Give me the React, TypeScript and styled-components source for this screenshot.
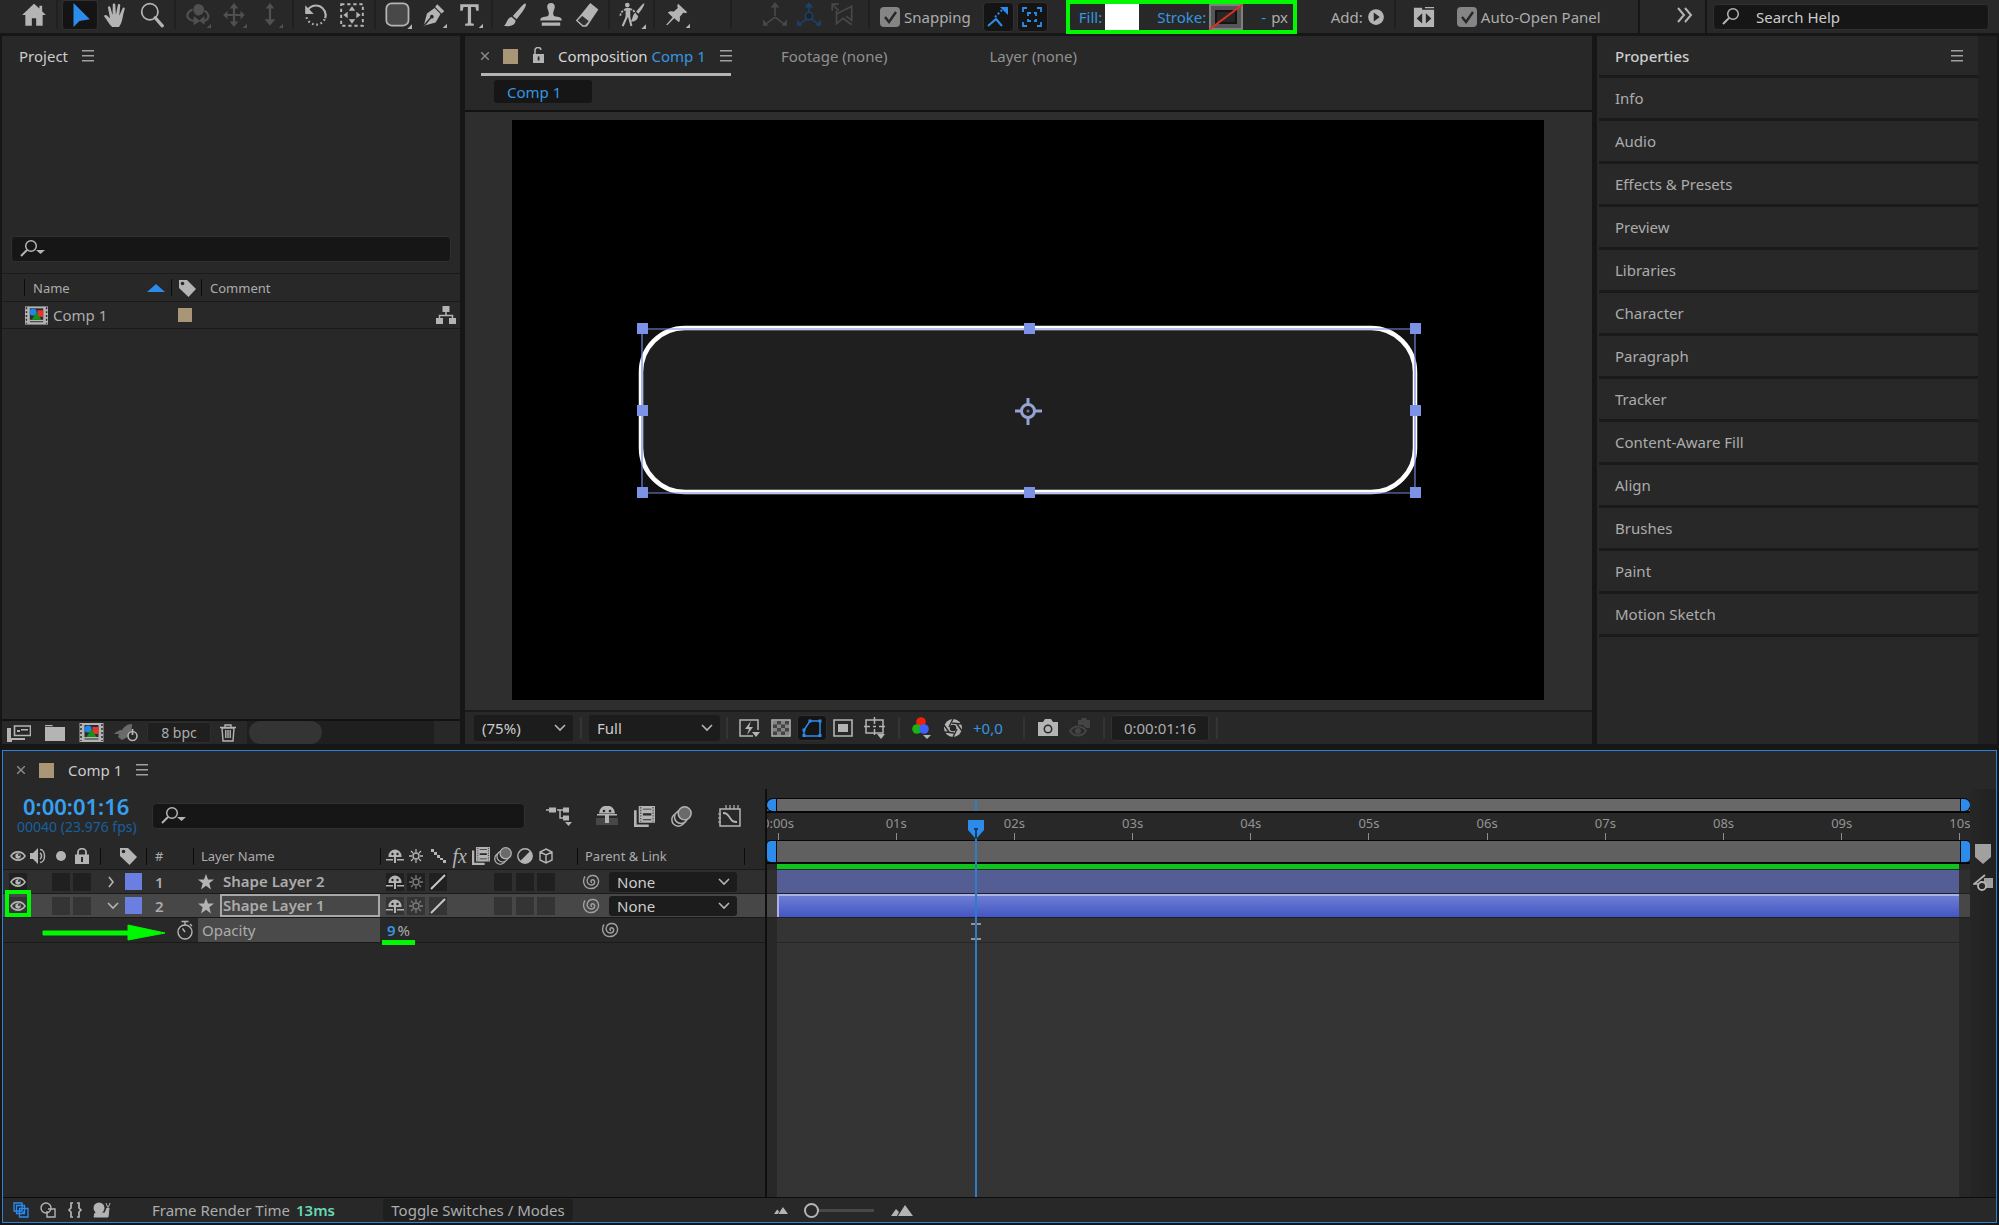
import React from "react";
import styled, { createGlobalStyle, css } from "styled-components";

/* ---------- theme values ---------- */
const c = {
  panel: "#282828",
  gap: "#161616",
  well: "#161616",
  line: "#1a1a1a",
  text: "#acacac",
  bright: "#cccccc",
  icon: "#b4b4b4",
  dim: "#505050",
  blue: "#2d8ceb",
  link: "#3596e0",
  tan: "#a99677",
  label: "#6b7fe0",
  mark: "#00f800",
};

const GlobalStyle = createGlobalStyle`
  * { box-sizing: border-box; }
  html, body { margin: 0; background: ${c.gap}; }
  body, button, input, select {
    font-family: "Noto Sans", "Open Sans", sans-serif;
    font-size: 15px;
    line-height: 20px;
    color: ${c.text};
  }
  button { background: none; border: 0; padding: 0; cursor: default; }
  h2 { margin: 0; font-size: 15px; font-weight: 400; }
  svg { display: block; flex: none; }
`;

/* ---------- icons ---------- */
type IconProps = { size?: number; h?: number; box?: string; color?: string; children: React.ReactNode };
const Icon = ({ size = 24, h, box = "0 0 24 24", color = c.icon, children }: IconProps) => (
  <svg width={size} height={h ?? size} viewBox={box} fill={color} stroke="none" aria-hidden="true">
    {children}
  </svg>
);
const line = (color: string, w = 1.6) => ({ fill: "none", stroke: color, strokeWidth: w });

const Home = () => <Icon size={26}><path d="M12 1.500 1 12h3v10h6v-7h4v7h6V12h3l-3.500-3.400V3.500h-2.500v2.600z" /></Icon>;
const Arrow = () => <Icon color={c.blue} size={26}><path d="M6 1v22l5.500-5.500L21 16z" /></Icon>;
const Hand = () => (
  <Icon size={26}>
    <path d="M8.500 23C6 21 4 17 1.300 13.600c-.8-1.200.9-2.300 2-1.300L6.500 15 4.600 5.400c-.3-1.600 1.800-2 2.200-.5L8.800 12 9 2.700c0-1.700 2.300-1.700 2.400 0l.5 9 1.800-8.900c.3-1.600 2.400-1.200 2.200.4L15 12.600l3-6.700c.7-1.400 2.500-.6 2 .8-1.300 4-1.600 7.300-2.600 10.900-.6 2.200-1.600 3.900-2.600 5.400z" />
  </Icon>
);
const Magnify = () => <Icon size={26}><g {...line(c.icon, 1.6)}><circle cx="10" cy="9" r="7.500" /><path d="m15 14.500 6.500 7.500" strokeWidth="3" strokeLinecap="round" /></g></Icon>;
const Corner = ({ color = c.icon }: { color?: string }) => <path d="M24 20v4h-4z" fill={color} />;
const Orbit = () => (
  <Icon size={26} color={c.dim}>
    <path d="M8 5a5 5 0 0 1 9.500 1c.5 4-2 6-5 6.500C9 12.500 7 8 8 5z" />
    <g {...line(c.dim, 2)}><path d="M7 7c-5 2-6 6-3.500 8.500 1.500 1.500 4 2 6 2M18 8c4 2.500 4.500 6 2.500 8-1 1-2.500 1.500-4 1.500" /></g>
    <path d="m8 13 6 4.500-6 4zM18 13v8l-5-4z" /><Corner color={c.dim} />
  </Icon>
);
const Pan = () => (
  <Icon size={26} color={c.dim}>
    <path d="m12 1 4 5h-3v5h5V8l4 4-4 4v-3h-5v5h3l-4 5-4-5h3v-5H6v3l-4-4 4-4v3h5V6H8z" /><Corner color={c.dim} />
  </Icon>
);
const Dolly = () => <Icon size={26} color={c.dim}><path d="m12 1 4 5h-3v10h4l-5 6-5-6h4V6H8z" /><Corner color={c.dim} /></Icon>;
const Rotate = () => (
  <Icon size={26}>
    <g {...line(c.icon, 2)}><path d="M4 8a9 9 0 0 1 16.500 7" /><path d="M20 16a9 9 0 0 1-17-4" strokeDasharray="1.500 2.500" /></g>
    <path d="M2 3v8h8z" />
  </Icon>
);
const PanBehind = () => (
  <Icon size={26}>
    <path d="M2 2h20v20H2z" {...line(c.icon, 1.8)} strokeDasharray="3 2.600" />
    <path d="m12 4 3 4H9zM12 20l-3-4h6zM4 12l4-3v6zM20 12l-4 3V9z" />
  </Icon>
);
const RoundRect = () => <Icon size={28}><rect x="2" y="2" width="19" height="19" rx="4.500" fill="#484848" stroke={c.icon} strokeWidth="1.500" /><Corner /></Icon>;
const Pen = () => (
  <Icon size={26}>
    <path d="m15 2 6.500 6.500-2.500 2-6-6zM12.500 5.500l5.500 5.500-4.500 8L2.500 22l3-11.500z" />
    <path d="m3 21.500 6-7" stroke="#282828" strokeWidth="1.300" /><circle cx="10" cy="13.500" r="1.700" fill="#282828" /><Corner />
  </Icon>
);
const TypeTool = () => <Icon size={26}><path d="M3 2h17v6h-2.200L17 4.500h-4V19.500l2.500.6V22H7.500v-1.900l2.500-.6V4.500H6L5.200 8H3z" /><Corner /></Icon>;
const Brush = () => <Icon size={26}><path d="M21.800 1.500c1 .8-.6 4-2.600 7L13.500 16 10 13l7-8c2-2.300 4-4.200 4.800-3.500zM9 13.800l3.600 3.200c-.5 4.500-5 6-11 5 3-1.500 3-8 7.400-8.200z" /></Icon>;
const Stamp = () => <Icon size={26}><path d="M12 1a3.500 3.500 0 0 1 3.500 3.500c0 2-1.500 3.500-1.500 6 0 2 1 3 4 3 3 .3 4 1.500 4 3.500H2c0-2 1-3.200 4-3.500 3 0 4-1 4-3 0-2.500-1.500-4-1.500-6A3.500 3.500 0 0 1 12 1zM3.500 19h17v3h-17z" /></Icon>;
const Eraser = () => <Icon size={26}><path d="m15 1 7.500 6L12 22.500H8L2 17z" /><path d="m7.500 12 7 5.500L10.500 22H8l-5.500-5z" fill="#303030" stroke={c.icon} strokeWidth="1.200" /></Icon>;
const Puppet = () => (
  <Icon size={28}>
    <circle cx="8" cy="3.500" r="2" />
    <path d="M6.500 6h4v8h-4z" /><path d="M7 7c-3 1-5 3-5 6M10 7c3 0 4 2 5 4" {...line(c.icon, 1.500)} strokeDasharray="2 1" />
    <path d="M7.500 13.500 4 21.500M9.500 13.500l2 8" {...line(c.icon, 1.800)} />
    <path d="M22.500 2c.6.600-1.500 5-5 9l-2-1.800C18.500 5.500 22 1.500 22.500 2zM14.800 10.500l2.500 2.300c-.5 3.500-3 5-6.500 4.700 2-1.500 1.500-6.500 4-7z" /><Corner />
  </Icon>
);
const Pin = () => <Icon size={26}><path d="m13 1.500 8.500 8-2 .8-1.500-.5-3.500 4c.5 2 .3 3.700-.8 5L9.500 15 3 21.500 2 21l6-7-4.500-4.300C5 8.500 7 8.300 8.800 9l4-3.500-.6-2z" /><Corner /></Icon>;
const Axis = ({ color, view = false }: { color: string; view?: boolean }) => (
  <Icon size={26} color={color}>
    <path d="M12 3v10M12 14l-8 6M12 14l8 6" {...line(color, 1.500)} />
    <path d="m12 0 4 5H8zM1 22v-6l5 6zM23 22v-6l-5 6z" />
    {view && <circle cx="12" cy="13" r="3.500" fill="#222" stroke={color} strokeWidth="1.500" />}
  </Icon>
);
const ViewAxis = () => <Icon size={26} color="#484848"><g {...line("#484848", 1.500)}><path d="M3 3l5 5M2 8V2h6" /><path d="M6 8v12l6-5 8 6M6 11l14-7v13l-5-4" /></g></Icon>;
const SnapEdge = () => <Icon size={24} color={c.blue}><path d="m2 21 8-7 6 7" {...line(c.blue, 2)} /><path d="m9 12 7-7" {...line(c.blue, 2)} strokeDasharray="2 2" /><path d="M14 2h8v8z" /></Icon>;
const SnapBox = () => (
  <Icon size={24}><g {...line(c.blue, 1.800)}><path d="M3 7V3h4M17 3h4v4M21 17v4h-4M7 21H3v-4" /><path d="M8 11V8h3M14 8h2v3M16 14v2h-2M11 16H8v-2" /></g></Icon>
);
const AddCircle = () => <Icon size={18}><circle cx="12" cy="12" r="10.500" /><path d="m9 6 8 6-8 6z" fill="#282828" /></Icon>;
const PanelSwap = () => <Icon size={22}><path d="M1 2h9v2h13v19H1zM13 1h10v1.500H13z" /><path d="m10 8-6 5.500 6 5.500zM14 8l6 5.500-6 5.500z" fill="#282828" /></Icon>;
const Chevrons = () => <Icon size={18} box="0 0 18 18"><path d="m2 2 6 7-6 7M9 2l6 7-6 7" {...line(c.icon, 2)} /></Icon>;
const Search = ({ drop = true }: { drop?: boolean }) => (
  <Icon size={26} h={20} box="0 0 26 20">
    <circle cx="11" cy="7" r="5.300" {...line(c.icon, 1.500)} /><path d="m7 11-6 6" {...line(c.icon, 2)} />
    {drop && <path d="M16 11h9l-4.500 4z" />}
  </Icon>
);
const Menu = () => <Icon size={12} box="0 0 12 12"><path d="M0 0h12v1.500H0zM0 5h12v1.500H0zM0 10h12v1.500H0z" fill="#a0a0a0" /></Icon>;
const Close = () => <Icon size={8} box="0 0 8 8"><path d="m0 0 8 8M8 0 0 8" {...line("#8c8c8c", 1.400)} /></Icon>;
const Unlock = () => <Icon size={14} h={18} box="0 0 14 18"><path d="M1 7h11v9H1z" /><path d="M3 9V4a3 3 0 0 1 6-1" {...line(c.icon, 1.500)} /><path d="M5.700 9.500h1.800v4H5.700z" fill="#282828" /></Icon>;
const Lock = () => <Icon size={14} h={17} box="0 0 14 17"><path d="M0 6.500h14V16H0z" /><path d="M3 8V4a4 3.300 0 0 1 8 0v4" {...line(c.icon, 1.800)} /><path d="M6 9h2v5H6z" fill="#282828" /></Icon>;
const Tag = () => <Icon size={18} box="0 0 18 18"><path d="M1 1h8l9 9-7.500 8L1 9z" /><circle cx="4.500" cy="4.500" r="1.800" fill="#282828" /></Icon>;
const SortUp = () => <Icon size={18} h={8} box="0 0 18 8" color={c.blue}><path d="M9 0l9 8H0z" /></Icon>;
const CompIcon = ({ w = 23 }: { w?: number }) => (
  <Icon size={w} h={19} box="0 0 24 19">
    <path d="M0 0h24v19H0z" /><path d="M5 2h14v12H5z" fill="#2c2c2c" />
    <path d="M1.500 1v17M22.500 1v17" stroke="#2c2c2c" strokeWidth="1.500" strokeDasharray="2 2" /><path d="M5 16h14" stroke="#2c2c2c" />
    <path d="M13 4h6v7h-6z" fill="#e8342c" /><circle cx="8.500" cy="6" r="3.600" fill="#1f86ee" /><path d="m12 6 5 8H7z" fill="#149414" />
  </Icon>
);
const Tree = () => <Icon size={20} h={18} box="0 0 20 18"><path d="M6.500 0h7v6h-7zM0 12h7v6H0zM13 12h7v6h-7z" /><path d="M10 6v3.500M3.500 12V9.500h13V12" {...line(c.icon, 1.500)} /></Icon>;
const Footage = () => <Icon size={24} h={18} box="0 0 24 18"><path d="M0 4h4v10h14v2H5v2H0z" /><path d="M7.500 2h16v9.500h-16z" fill="#282828" stroke={c.icon} strokeWidth="1.600" /><path d="M10 6h3v2h-3zM14 5h7v1.500h-7z" /></Icon>;
const Folder = () => <Icon size={20} h={16} box="0 0 20 16"><path d="M0 2h20v14H0zM0 0h7l1.500 1.200H0z" /></Icon>;
const Rocket = () => <Icon size={24} h={18} box="0 0 24 18"><path d="M18 0c-5 0-8 3-10 6C5 6 2 8 0 10h5l-1 3 4 3 4-2c5-4 6-9 6-14z" fill="#6a6a6a" /><circle cx="18.500" cy="12" r="4.500" fill="#282828" stroke={c.icon} strokeWidth="1.600" /><path d="M18.500 5v6" stroke={c.icon} strokeWidth="1.800" /></Icon>;
const Trash = () => <Icon size={16} h={18} box="0 0 16 18"><g {...line(c.icon, 1.400)}><path d="M2 4h12l-1 13H3zM0 3.500h16M5 3V1h6v2M5.800 6v8M8 6v8M10.200 6v8" /></g></Icon>;
const Down = () => <Icon size={12} h={8} box="0 0 12 8"><path d="m1 1 5 5 5-5" {...line(c.icon, 1.600)} /></Icon>;
const Right = () => <Icon size={8} h={12} box="0 0 8 12"><path d="m2 1 4 5-4 5" {...line(c.icon, 1.600)} /></Icon>;
const Bolt = () => <Icon size={22} h={20} box="0 0 22 20"><path d="M15 18H2V2h18v10" {...line(c.icon, 1.500)} /><path d="m13 3-6 8h4l-2 6 6-8h-4zM14 14h8l-4 5z" /></Icon>;
const Checker = () => (
  <Icon size={20} box="0 0 20 20">
    <path d="M1 2h18v16H1z" fill="#444" stroke={c.icon} strokeWidth="1.500" />
    {[0, 1, 2, 3].map((r) => [0, 1].map((k) => <path key={`${r}${k}`} d={`M${2 + k * 8 + (r % 2) * 4} ${3 + r * 3.5}h4v3.500h-4z`} fill="#858585" />))}
  </Icon>
);
const MaskShape = () => <Icon size={22} h={20} box="0 0 22 20" color={c.blue}><path d="M9 3h10v15H3v-6z" {...line(c.blue, 1.500)} /><path d="M7.500 1.500h3v3h-3zM17.500 1.500h3v3h-3zM17.500 16h3v3h-3zM1.500 16h3v3h-3zM1.500 10.500h3v3h-3z" /></Icon>;
const SafeZone = () => <Icon size={20} box="0 0 20 20"><path d="M1 2h18v16H1z" {...line(c.icon, 1.600)} /><path d="M5 6h10v8H5z" /></Icon>;
const Region = () => <Icon size={22} box="0 0 22 22"><path d="M2 3h17v13H2zM10.500 0v7M10.500 12v6M0 9.500h6M15 9.500h6M9 9.500h3" {...line(c.icon, 1.500)} /><path d="M13 17h8l-4 5z" /></Icon>;
const Rgb = () => <Icon size={20} h={22} box="0 0 20 22"><circle cx="9" cy="5" r="4.800" fill="#f0200c" /><circle cx="5" cy="12" r="4.800" fill="#19b50f" /><circle cx="12" cy="12" r="4.800" fill="#3f5fff" /><path d="M11 18h8l-4 4z" /></Icon>;
const Aperture = () => (
  <Icon size={20} box="0 0 20 20"><circle cx="10" cy="10" r="9" /><g {...line("#282828", 1.400)}><path d="M10 1 6 9M18 6l-9-1M19 13l-5-7M10 19l4-8M2 14l9 1M1 7l5 7" /></g><circle cx="10" cy="10" r="3.300" fill="#282828" /></Icon>
);
const Camera = () => <Icon size={20} h={18} box="0 0 20 18"><path d="M0 3h5l2-3h6l2 3h5v14H0z" /><circle cx="10" cy="10" r="3.700" fill="none" stroke="#282828" strokeWidth="1.500" /></Icon>;
const Snapshot = () => <Icon size={22} h={20} box="0 0 22 20" color="#444"><path d="M1 13c4-6 12-6 16 0-4 6-12 6-16 0z" {...line("#444", 2)} /><circle cx="9" cy="13" r="3" /><path d="M9 2h3l1-2h4l1 2h3v8h-4l-3-3H9z" /></Icon>;

const Eye = () => <Icon size={16} h={12} box="0 0 16 12"><path d="M1 6c3.500-5.500 10.500-5.500 14 0-3.500 5.500-10.500 5.500-14 0z" {...line(c.icon, 1.600)} /><circle cx="8" cy="6" r="2.700" /><circle cx="9" cy="5" r="1" fill="#282828" /></Icon>;
const Speaker = () => <Icon size={18} h={16} box="0 0 18 16"><path d="M0 5h3l5-5v16l-5-5H0z" /><path d="M10 5c2 1 2 5 0 6M10 1.500c6 0 6 13 0 13" {...line(c.icon, 1.500)} /></Icon>;
const Dot = () => <Icon size={10} box="0 0 10 10"><circle cx="5" cy="5" r="5" /></Icon>;
const Shy = () => <Icon size={18} h={14} box="0 0 18 14"><path d="M2.500 7a6.500 6.500 0 0 1 13 0v1h-13zM0 10h7v1.500H0zM11 10h7v1.500h-7zM8 8h2v6H8z" /><circle cx="6.500" cy="5" r="1.200" fill="#222" /><circle cx="11.500" cy="5" r="1.200" fill="#222" /></Icon>;
const Sun = ({ color = c.icon }: { color?: string }) => <Icon size={16} box="0 0 16 16"><circle cx="8" cy="8" r="3" {...line(color, 1.400)} /><path d="M8 1v3M8 12v3M1 8h3M12 8h3M3 3l2 2M11 11l2 2M13 3l-2 2M5 11l-2 2" {...line(color, 1.300)} /></Icon>;
const Jag = () => <Icon size={16} box="0 0 16 16"><path d="M1 1h3v3H1zM4 4h3v3H4zM7 7h3v3H7zM10 10h3v2h-3zM13 12h3v3h-3z" /></Icon>;
const Slash = () => <Icon size={16} box="0 0 16 16"><path d="M1 15 15 1" {...line("#c8c8c8", 2)} /></Icon>;
const Film = ({ size = 18 }: { size?: number }) => (
  <Icon size={size} box="0 0 20 20">
    <path d="M4.500 0H20v16H4.500zM0 4h2.500v13.500H14V20H0z" />
    <path d="M8.500 2.500h8v.8h-8zM8.500 7h8v2h-8zM8.500 12.700h8v.8h-8z" fill="#282828" />
    <path d="M6.500 1v14M18.200 1v14" stroke="#383838" strokeDasharray="1.300 1.300" />
  </Icon>
);
const Blur = ({ size = 18 }: { size?: number }) => <Icon size={size} box="0 0 20 20"><g fill="#282828" stroke={c.icon} strokeWidth="1.400"><circle cx="7" cy="13" r="6.200" /><circle cx="9.500" cy="10.500" r="6.200" /><circle cx="13" cy="7" r="6.200" fill="#6a6a6a" /></g></Icon>;
const Half = () => <Icon size={16} box="0 0 16 16"><circle cx="8" cy="8" r="7.200" {...line(c.icon, 1.400)} /><path d="M13.200 3a7.200 7.200 0 0 1-10.200 10.200z" /></Icon>;
const Cube = () => <Icon size={16} box="0 0 16 16"><path d="m8 1 6 3v8l-6 3-6-3V4zM2 4l6 3 6-3M8 7v8" {...line(c.icon, 1.400)} /></Icon>;
const Star = () => <Icon size={16} box="0 0 16 16"><path d="m8 0 2 5.500h6l-4.700 3.800L13 15.500l-5-3.700-5 3.700 1.700-6.200L0 5.500h6z" /></Icon>;
const Swirl = () => (
  <Icon size={18} h={16} box="0 0 18 16">
    <path d="M3 2.500C0 7 2 14.500 9 14.500c5 0 8-4 7.500-8C15.500.5 8 0 5.800 4.300c-2 4 1 7.200 4.200 6.700 3.500-.6 3.500-5.300.5-5.300-2 0-2 2.800-.4 2.800" {...line("#a0a0a0", 1.400)} />
  </Icon>
);
const Stopwatch = () => <Icon size={16} h={20} box="0 0 16 20"><circle cx="8" cy="12" r="7" {...line(c.icon, 1.400)} /><path d="M8 12 5.500 8.500M8 2v3M4.500 1.500h7M13 4l2 2" {...line(c.icon, 1.400)} /></Icon>;
const Flow = () => <Icon size={26} h={20} box="0 0 26 20"><path d="M0 4h6M11 4h8M14 4v8h6" {...line(c.icon, 1.500)} /><path d="M3 1.500h7v5H3zM17 1.500h6v5h-6zM17 9.500h6v5h-6zM19 16h7l-3.500 4z" /></Icon>;
const ShyBig = () => <Icon size={24} h={20} box="0 0 24 20"><path d="M1 12h22v7H1z" fill="#484848" /><path d="M4 7.500a8 8 0 0 1 16 0zM2 8h20v1.500H2zM10 8h4v9h-4z" /><circle cx="9" cy="5" r="1.300" fill="#282828" /><circle cx="15" cy="5" r="1.300" fill="#282828" /></Icon>;
const Graph = () => <Icon size={24} h={22} box="0 0 24 22"><path d="M2 4h20v17H2z" {...line(c.icon, 1.500)} /><path d="M5 8c4 0 5 2 7 5s3 4 7 4" {...line(c.icon, 1.800)} /><path d="M8 0v4M12 0v4M16 0v4M20 0v4M0 9h3M0 13h3M0 17h3" {...line(c.icon, 1.200)} /></Icon>;
const Shield = () => <Icon size={16} h={20} box="0 0 16 20" color="#a0a0a0"><path d="M0 0h16v13l-8 7-8-7z" /></Icon>;
const Motion = () => <Icon size={20} h={18} box="0 0 20 18"><path d="M11 4h9v10h-9z" fill="#a0a0a0" /><path d="M12 1 1 10h6" {...line(c.icon, 1.700)} /><circle cx="9" cy="12" r="4" fill="#282828" stroke={c.icon} strokeWidth="1.800" /></Icon>;
const Panes = () => <Icon size={16} box="0 0 16 16"><g fill="#1c2c40" stroke={c.blue} strokeWidth="1.300"><path d="M1 1h8v8H1zM3.500 3.500h8v8h-8zM6.500 6.500H15V15H6.500z" /></g><path d="M9.500 9.500h2.500V12H9.500z" fill={c.blue} /></Icon>;
const Toggle2 = () => <Icon size={16} box="0 0 16 16"><circle cx="6" cy="6" r="5" {...line(c.icon, 1.400)} /><path d="M8 7h7v8H7V9" {...line(c.icon, 1.400)} /></Icon>;
const Braces = () => <Icon size={16} box="0 0 16 16"><path d="M6 1H4v5L2 8l2 2v5h2M10 1h2v5l2 2-2 2v5h-2" {...line(c.icon, 1.700)} /></Icon>;
const Snail = () => <Icon size={18} h={16} box="0 0 18 16"><circle cx="6" cy="6" r="5.500" /><path d="M2 11h10l2-5h2l-1 9H1zM13 1l1.500 4M17 1l-1.500 4" stroke={c.icon} /></Icon>;
const Hills = ({ w }: { w: number }) => <Icon size={w} h={w / 2} box="0 0 22 11"><path d="m0 11 5-7 3 3-2 4zM7 11l7-11 8 11z" /></Icon>;

/* ---------- shared parts ---------- */
const Panel = styled.section`
  background: ${c.panel};
  display: flex;
  flex-direction: column;
  min-width: 0;
`;
const IconButton = styled.button<{ $w?: number; $on?: boolean; $h?: number }>`
  display: flex;
  align-items: center;
  justify-content: center;
  flex: none;
  width: ${(p) => p.$w ?? 36}px;
  height: ${(p) => p.$h ?? 30}px;
  ${(p) => p.$on && css`background: #141414; border: 1px solid #303030; border-radius: 4px;`}
`;
const Row = styled.div<{ $gap?: number; $pl?: number }>`
  display: flex;
  align-items: center;
  gap: ${(p) => p.$gap ?? 0}px;
  padding-left: ${(p) => p.$pl ?? 0}px;
`;
const Grow = styled.div`flex: 1;`;
const Swatch = styled.span<{ $size?: number; $color?: string }>`
  flex: none;
  width: ${(p) => p.$size ?? 15}px;
  height: ${(p) => p.$size ?? 15}px;
  background: ${(p) => p.$color ?? c.tan};
`;
const Field = styled.label<{ $w?: number }>`
  display: flex;
  align-items: center;
  height: 26px;
  ${(p) => p.$w && css`width: ${p.$w}px;`}
  padding-left: 8px;
  background: ${c.well};
  border: 1px solid #303030;
  border-radius: 4px;
  input {
    flex: 1;
    min-width: 0;
    border: 0;
    outline: 0;
    padding: 0 8px;
    background: none;
    color: ${c.bright};
    &::placeholder { color: ${c.bright}; opacity: 1; }
  }
`;
const SelectBox = styled.span<{ $w: number; $h: number; $pad: number }>`
  display: grid;
  flex: none;
  align-items: center;
  width: ${(p) => p.$w}px;
  height: ${(p) => p.$h}px;
  background: #1c1c1c;
  border-radius: 3px;
  > * { grid-area: 1 / 1; }
  svg { justify-self: end; margin-right: 7px; pointer-events: none; }
  select {
    appearance: none;
    width: 100%;
    height: 100%;
    border: 0;
    padding: 0 0 0 ${(p) => p.$pad}px;
    background: none;
    color: ${c.bright};
  }
`;
const Select = ({ w, h, value, label, pad = 8 }: { w: number; h: number; value: string; label: string; pad?: number }) => (
  <SelectBox $w={w} $h={h} $pad={pad}>
    <select aria-label={label} defaultValue={value}><option>{value}</option></select>
    <Down />
  </SelectBox>
);
const CheckLabel = styled.label`
  display: flex;
  align-items: center;
  gap: 4px;
  white-space: nowrap;
`;
const CheckBox = styled.span`
  display: grid;
  place-items: center;
  > * { grid-area: 1 / 1; pointer-events: none; }
  input {
    appearance: none;
    margin: 0;
    width: 20px;
    height: 20px;
    border-radius: 4px;
    background: #858585;
    pointer-events: auto;
  }
`;
const Check = ({ label }: { label: string }) => (
  <CheckLabel>
    <CheckBox>
      <input type="checkbox" defaultChecked />
      <Icon size={16} box="0 0 16 16"><path d="m3 8 4 5 7-10" {...line("#262626", 2.400)} /></Icon>
    </CheckBox>
    {label}
  </CheckLabel>
);

/* ---------- top toolbar ---------- */
const Toolbar = styled.header`
  display: flex;
  align-items: flex-start;
  height: 33px;
  padding: 0 10px 0 16px;
  background: ${c.panel};
  > * { flex: none; }
`;
const Sep = styled.span<{ $l?: number; $r?: number; $tall?: boolean }>`
  width: 2px;
  height: ${(p) => (p.$tall ? 33 : 29)}px;
  margin: 0 ${(p) => p.$r ?? 4}px 0 ${(p) => p.$l ?? 4}px;
  background: ${(p) => (p.$tall ? c.gap : "#202020")};
`;
const Tools = styled(Row)`height: 34px;`;
const Marked = styled.div`
  display: flex;
  align-items: center;
  width: 231px;
  height: 34px;
  margin-left: 18px;
  padding-left: 9px;
  border: 4px solid ${c.mark};
  button { color: ${c.link}; }
`;
const Chip = styled.button<{ $bg: string }>`
  width: 34px;
  height: 26px;
  margin: 0 18px 0 3px;
  background: ${(p) => p.$bg};
`;
const ToolSpacer = styled(Grow)`&& { flex: 1; }`;

const TopBar = () => (
  <Toolbar>
    <IconButton aria-label="Home"><Home /></IconButton>
    <Sep />
    <IconButton aria-label="Selection" $on><Arrow /></IconButton>
    <IconButton aria-label="Hand"><Hand /></IconButton>
    <IconButton aria-label="Zoom"><Magnify /></IconButton>
    <Sep />
    <IconButton aria-label="Orbit"><Orbit /></IconButton>
    <IconButton aria-label="Pan camera"><Pan /></IconButton>
    <IconButton aria-label="Dolly"><Dolly /></IconButton>
    <Sep />
    <IconButton aria-label="Rotate"><Rotate /></IconButton>
    <IconButton aria-label="Pan behind"><PanBehind /></IconButton>
    <Sep />
    <IconButton aria-label="Rounded rectangle"><RoundRect /></IconButton>
    <IconButton aria-label="Pen"><Pen /></IconButton>
    <IconButton aria-label="Type"><TypeTool /></IconButton>
    <Sep $l={3} />
    <IconButton aria-label="Brush"><Brush /></IconButton>
    <IconButton aria-label="Clone stamp"><Stamp /></IconButton>
    <IconButton aria-label="Eraser"><Eraser /></IconButton>
    <Sep $l={3} />
    <IconButton aria-label="Roto brush"><Puppet /></IconButton>
    <Sep $l={3} />
    <IconButton aria-label="Puppet pin"><Pin /></IconButton>
    <Sep $l={35} $r={26} />
    <IconButton aria-label="Local axis" $w={34}><Axis color="#484848" /></IconButton>
    <IconButton aria-label="World axis" $w={34}><Axis color="#1d4068" view /></IconButton>
    <IconButton aria-label="View axis" $w={34}><ViewAxis /></IconButton>
    <Sep $l={8} $r={10} />
    <Tools $gap={12}>
      <Check label="Snapping" />
      <Row $gap={3}>
        <IconButton aria-label="Snap to edges" $w={31} $on><SnapEdge /></IconButton>
        <IconButton aria-label="Snap to features" $w={31} $on><SnapBox /></IconButton>
      </Row>
    </Tools>
    <Marked>
      <button>Fill:</button>
      <Chip $bg="#fff" aria-label="Fill colour" />
      <button>Stroke:</button>
      <Chip $bg="#4a4a4a" aria-label="Stroke colour">
        <svg width="34" height="26" viewBox="0 0 34 26">
          <path d="M1 1h32v24H1z" fill="#555" stroke="#808080" strokeWidth="2" />
          <path d="M7 7h20v12H7z" fill="#262626" stroke="#141414" strokeWidth="2" />
          <path d="M1 25 33 1" stroke="#e03020" strokeWidth="2" />
        </svg>
      </Chip>
      <Row $gap={5}><button>-</button>px</Row>
    </Marked>
    <Tools $pl={34} $gap={4}>Add:<IconButton aria-label="Add" $w={18}><AddCircle /></IconButton></Tools>
    <Sep $l={9} $r={17} />
    <Tools $gap={22}>
      <IconButton aria-label="Swap panel" $w={22}><PanelSwap /></IconButton>
      <Check label="Auto-Open Panel" />
    </Tools>
    <ToolSpacer />
    <Sep $tall $r={36} />
    <IconButton aria-label="More" $w={18}><Chevrons /></IconButton>
    <Sep $tall $l={11} $r={6} />
    <Tools>
      <Field $w={276}>
        <Search drop={false} />
        <input placeholder="Search Help" aria-label="Search Help" />
      </Field>
    </Tools>
  </Toolbar>
);

/* ---------- project panel ---------- */
const PanelHead = styled.header`
  display: flex;
  align-items: center;
  gap: 14px;
  height: 40px;
  padding-left: 17px;
  color: ${c.bright};
`;
const SearchWrap = styled.div`padding: 160px 9px 11px 9px;`;
const ProjectTable = styled.table`
  display: block;
  flex: 1;
  border-top: 1px solid ${c.line};
  thead, tbody { display: block; }
  tr {
    display: grid;
    grid-template-columns: 22px 147px 30px 1fr 25px;
    border-bottom: 1px solid ${c.line};
  }
  th, td { padding: 0; display: flex; align-items: center; font-weight: 400; text-align: left; }
`;
const HeadCell = styled.th<{ $pad?: number }>`
  && { padding: 0 6px 0 ${(p) => p.$pad ?? 6}px; }
  justify-content: space-between;
  height: 17px;
  margin: 5px 0;
  border-left: 1px solid #0c0c0c;
  font-size: 13px;
  white-space: nowrap;
`;
const ItemCell = styled.td<{ $pad?: number }>`
  && { padding-left: ${(p) => p.$pad ?? 1}px; }
  gap: 5px;
  height: 26px;
`;
const ProjectFoot = styled.footer`
  display: flex;
  align-items: center;
  height: 25px;
  padding: 0 26px 0 3px;
  border-top: 2px solid #121212;
`;
const DepthButton = styled.button`
  width: 64px;
  height: 21px;
  margin-right: 8px;
  background: #1f1f1f;
  border: 1px solid #2e2e2e;
  border-radius: 3px;
  font-size: 14px;
  line-height: 18px;
`;
const ScrollTrack = styled.div`
  flex: 1;
  height: 23px;
  margin-left: 10px;
  background: #1f1f1f;
`;
const ScrollThumb = styled.div`
  width: 73px;
  height: 23px;
  margin-left: 2px;
  border-radius: 12px;
  background: #343434;
`;

const Project = () => (
  <Panel>
    <PanelHead><h2>Project</h2><Menu /></PanelHead>
    <SearchWrap>
      <Field><Search /><input aria-label="Search project" /></Field>
    </SearchWrap>
    <ProjectTable>
      <thead>
        <tr>
          <td />
          <HeadCell $pad={8}>Name<SortUp /></HeadCell>
          <HeadCell><Tag /></HeadCell>
          <HeadCell $pad={8}>Comment</HeadCell>
        </tr>
      </thead>
      <tbody>
        <tr>
          <td />
          <ItemCell><CompIcon />Comp 1</ItemCell>
          <ItemCell $pad={7}><Swatch $size={14} /></ItemCell>
          <td />
          <ItemCell><Tree /></ItemCell>
        </tr>
      </tbody>
    </ProjectTable>
    <ProjectFoot>
      <IconButton aria-label="Interpret footage" $h={22} $w={28}><Footage /></IconButton>
      <IconButton aria-label="New folder" $h={22} $w={44}><Folder /></IconButton>
      <IconButton aria-label="New composition" $h={22} $w={28}><CompIcon w={25} /></IconButton>
      <IconButton aria-label="Adjust settings" $h={22} $w={42}><Rocket /></IconButton>
      <DepthButton>8 bpc</DepthButton>
      <IconButton aria-label="Delete" $h={22} $w={18}><Trash /></IconButton>
      <ScrollTrack><ScrollThumb /></ScrollTrack>
    </ProjectFoot>
  </Panel>
);

/* ---------- composition panel ---------- */
const Tabs = styled.nav`
  display: flex;
  align-items: center;
  height: 40px;
  padding-left: 16px;
`;
const ActiveTab = styled.div`
  display: flex;
  align-items: center;
  gap: 14px;
  height: 37px;
  width: 250px;
  color: #d6d6d6;
  white-space: nowrap;
  border-bottom: 3px solid #b4b4b4;
  align-self: flex-end;
  em { font-style: normal; color: ${c.link}; }
`;
const TabTitle = styled.span`
  flex: 1;
  margin-left: -2px;
`;
const Tab = styled.button<{ $ml: number }>`
  margin-left: ${(p) => p.$ml}px;
  color: #909090;
`;
const SubTabs = styled.div`
  height: 36px;
  padding: 4px 0 0 29px;
  border-bottom: 2px solid #121212;
  button {
    width: 98px;
    height: 23px;
    padding-left: 13px;
    border-radius: 3px;
    background: ${c.well};
    color: ${c.link};
    text-align: left;
  }
`;
const Viewer = styled.div`
  padding: 8px 48px 10px 47px;
  background: #2e2e2e;
  svg { width: 100%; height: auto; background: #000; }
`;
const ViewBar = styled.footer`
  display: flex;
  align-items: center;
  height: 34px;
  padding-left: 9px;
  border-top: 2px solid ${c.line};
`;
const Divider = styled.span<{ $m?: number }>`
  flex: none;
  width: 2px;
  height: 22px;
  margin: 0 ${(p) => p.$m ?? 7}px;
  background: #343434;
`;
const Exposure = styled.button`width: 46px; padding-left: 4px; color: ${c.link}; text-align: left;`;
const TimeButton = styled.button`
  width: 98px;
  height: 26px;
  border-radius: 3px;
  background: #1c1c1c;
  border: 1px solid #303030;
`;

const handles = [[130, 209], [517, 209], [903, 209], [130, 291], [903, 291], [130, 373], [517, 373], [903, 373]];

const Composition = () => (
  <Panel>
    <Tabs>
      <ActiveTab>
        <Close />
        <Swatch />
        <Unlock />
        <TabTitle>Composition <em>Comp 1</em></TabTitle>
        <Menu />
      </ActiveTab>
      <Tab $ml={50}>Footage (none)</Tab>
      <Tab $ml={102}>Layer (none)</Tab>
    </Tabs>
    <SubTabs><button>Comp 1</button></SubTabs>
    <Viewer>
      <svg viewBox="0 0 1032 580" role="img" aria-label="Composition canvas">
        <path d="M129 208h774v165H129z" fill="#111" />
        <rect x="129" y="208" width="774" height="164" rx="44" fill="#1f1f1f" stroke="#fff" strokeWidth="4.500" />
        <path d="M130 209h773v164H130z" fill="none" stroke="#6f87dc" strokeWidth="1.200" />
        {handles.map(([x, y]) => <path key={`${x}-${y}`} d={`M${x - 5} ${y - 6}h11v11h-11z`} fill="#7b92e6" />)}
        <g stroke="#94a2d6" fill="none" strokeWidth="3">
          <circle cx="516" cy="291" r="6.500" />
          <path d="M516 278v6M516 298v7M503 291h6M523 291h7" />
        </g>
        <circle cx="516" cy="291" r="1.500" fill="#707a9c" />
      </svg>
    </Viewer>
    <ViewBar>
      <Row>
        <Select w={99} h={26} value="(75%)" label="Magnification" />
        <Divider />
        <Select w={131} h={26} value="Full" label="Resolution" />
        <Divider $m={6} />
      </Row>
      <IconButton aria-label="Fast previews" $w={30} $h={26}><Bolt /></IconButton>
      <IconButton aria-label="Transparency grid" $w={33} $h={26}><Checker /></IconButton>
      <IconButton aria-label="Mask visibility" $w={30} $h={26} $on><MaskShape /></IconButton>
      <IconButton aria-label="Region of interest" $w={32} $h={26}><SafeZone /></IconButton>
      <IconButton aria-label="Guides" $w={32} $h={26}><Region /></IconButton>
      <Divider />
      <IconButton aria-label="Channels" $w={30} $h={26}><Rgb /></IconButton>
      <IconButton aria-label="Reset exposure" $w={32} $h={26}><Aperture /></IconButton>
      <Exposure>+0,0</Exposure>
      <Divider $m={8} />
      <IconButton aria-label="Take snapshot" $w={30} $h={26}><Camera /></IconButton>
      <IconButton aria-label="Show snapshot" $w={34} $h={26}><Snapshot /></IconButton>
      <Divider $m={6} />
      <TimeButton>0:00:01:16</TimeButton>
      <Divider />
    </ViewBar>
  </Panel>
);

/* ---------- properties stack ---------- */
const PropList = styled.div`
  flex: 1;
  padding-left: 2px;
  border-right: 19px solid #202020;
`;
const PropHead = styled.header`
  display: flex;
  align-items: center;
  justify-content: space-between;
  height: 39px;
  padding: 0 15px 0 16px;
  color: ${c.bright};
  h2 { font-weight: 500; }
`;
const PropButton = styled.button`
  display: block;
  width: 100%;
  height: 43px;
  padding-left: 16px;
  border-top: 3px solid ${c.line};
  text-align: left;
`;
const PropEnd = styled.div`border-top: 3px solid ${c.line};`;
const sections = ["Info", "Audio", "Effects & Presets", "Preview", "Libraries", "Character", "Paragraph", "Tracker", "Content-Aware Fill", "Align", "Brushes", "Paint", "Motion Sketch"];

const Properties = () => (
  <Panel>
    <PropList>
      <PropHead><h2>Properties</h2><Menu /></PropHead>
      {sections.map((s) => <PropButton key={s}>{s}</PropButton>)}
      <PropEnd />
    </PropList>
  </Panel>
);

/* ---------- timeline ---------- */
const Timeline = styled.section`
  flex: 1;
  display: flex;
  flex-direction: column;
  margin: 6px 2px 2px;
  background: ${c.panel};
  border: 1px solid #2d82d8;
`;
const TimeTabs = styled.header`
  display: flex;
  align-items: center;
  gap: 14px;
  height: 38px;
  padding-left: 14px;
  color: ${c.bright};
`;
const TimeBody = styled.div`
  flex: 1;
  display: grid;
  grid-template-columns: 764px minmax(0, 1fr) 26px;
`;
const LayerSide = styled.div`border-right: 2px solid #0e0e0e;`;
const LayerTools = styled.div`
  display: flex;
  align-items: center;
  height: 54px;
  padding-left: 12px;
`;
const Clock = styled.div`
  width: 137px;
  strong, small { display: block; white-space: nowrap; }
  strong { padding-left: 8px; font-size: 22px; line-height: 22px; font-weight: 600; color: #36a0f0; }
  small { padding-left: 2px; font-size: 14px; line-height: 20px; color: #17609e; }
`;
const LayerTable = styled.table`
  display: block;
  thead, tbody { display: block; }
  th, td { display: flex; align-items: center; padding: 0; font-weight: 400; text-align: left; }
`;
const LayerRow = styled.tr<{ $bg?: string; $h: number }>`
  display: grid;
  grid-template-columns: 97px 46px 47px 187px 197px 167px 1fr;
  height: ${(p) => p.$h}px;
  background: ${(p) => p.$bg ?? "transparent"};
  border-bottom: 1px solid ${c.line};
`;
const PropRow = styled(LayerRow)`grid-template-columns: 195px 182px 197px 1fr;`;
const LayerHead = styled.th<{ $pad?: number; $bare?: boolean }>`
  && { padding-left: ${(p) => p.$pad ?? 0}px; }
  align-self: center;
  height: 17px;
  border-left: ${(p) => (p.$bare ? 0 : 1)}px solid #0c0c0c;
  font-size: 13px;
  white-space: nowrap;
`;
const Cell = styled.td<{ $pad?: number; $gap?: number; $end?: number; $hi?: boolean }>`
  && { padding-left: ${(p) => p.$pad ?? 0}px; padding-right: ${(p) => p.$end ?? 0}px; }
  gap: ${(p) => p.$gap ?? 0}px;
  ${(p) => p.$end && css`justify-content: flex-end;`}
  ${(p) => p.$hi && css`background: #4a4a4a;`}
`;
const Slots = styled.div<{ $n: number; $w: number }>`
  display: grid;
  grid-template-columns: repeat(${(p) => p.$n}, 1fr);
  justify-items: center;
  align-items: center;
  width: ${(p) => p.$w}px;
`;
const Slot = styled.button<{ $box?: string }>`
  display: grid;
  place-items: center;
  width: 18px;
  height: 18px;
  background: ${(p) => p.$box ?? "transparent"};
`;
const LayerName = styled.span<{ $on?: boolean }>`
  flex: 1;
  height: 23px;
  padding: 0 1px;
  line-height: 19px;
  font-weight: 600;
  border: 2px solid ${(p) => (p.$on ? "#a8a8a8" : "transparent")};
`;
const Value = styled.button`
  display: flex;
  gap: 2px;
  padding-left: 7px;
  b { font-weight: 600; color: ${c.link}; }
`;
const Num = styled.span`font-weight: 600;`;
const Fx = styled.i`font-family: "Liberation Serif", serif; font-size: 20px; line-height: 18px; color: ${c.icon};`;

const TimeSide = styled.div`
  position: relative;
  display: flex;
  flex-direction: column;
  padding-top: 9px;
  overflow: hidden;
`;
const Range = styled.div<{ $h: number; $color: string; $r: number }>`
  display: flex;
  height: ${(p) => p.$h}px;
  background: ${(p) => p.$color};
  border: solid #060606;
  border-width: 1px 0 2px;
  border-radius: ${(p) => p.$r}px ${(p) => p.$r}px 0 0;
  justify-content: space-between;
  &::before, &::after { content: ""; width: 9px; background: ${c.blue}; box-shadow: 0 0 0 1px #0c0c0c; }
  &::before { border-radius: ${(p) => p.$r}px 0 0 ${(p) => p.$r}px; }
  &::after { border-radius: 0 ${(p) => p.$r}px ${(p) => p.$r}px 0; }
`;
const Ruler = styled.div`
  display: flex;
  justify-content: space-between;
  height: 27px;
  padding: 0 10px 0 11px;
  overflow: hidden;
  font-size: 13px;
  color: #949494;
`;
const Tick = styled.span`
  display: flex;
  flex-direction: column;
  align-items: center;
  width: 0;
  white-space: nowrap;
  &::after { content: ""; width: 1px; height: 7px; flex: none; background: #8c8c8c; }
`;
const Cached = styled.div`height: 5px; margin: 0 11px 1px 10px; background: #10c41e;`;
const Lane = styled.div<{ $bg: string; $h: number }>`
  height: ${(p) => p.$h}px;
  padding: 0 11px 0 10px;
  background: ${(p) => p.$bg};
  border-bottom: 1px solid #202020;
`;
const Bar = styled.div<{ $on?: boolean }>`
  height: 100%;
  ${(p) => p.$on
    ? css`background: linear-gradient(#6d7cd4, #4357c4); border: solid #aab2e4; border-width: 2px 0 0 2px;`
    : css`background: #545e94;`}
`;
const Empty = styled.div<{ $h?: number }>`
  ${(p) => (p.$h ? css`height: ${p.$h}px; border-bottom: 1px solid #262626;` : css`flex: 1;`)}
  margin: 0 11px 0 10px;
  background: #343434;
`;
const Playhead = styled.div`
  position: absolute;
  top: 10px;
  bottom: 0;
  left: calc((100% - 21px) * 0.168 + 2px);
  width: 16px;
  svg { position: absolute; left: 0; top: 0; }
  svg + svg { top: 123px; }
  &::before, &::after { content: ""; position: absolute; left: 7px; width: 2px; background: #2f7cc8; }
  &::before { top: 0; height: 12px; }
  &::after { top: 40px; bottom: 0; }
`;
const EndSide = styled.div`
  display: flex;
  flex-direction: column;
  align-items: center;
  gap: 10px;
  padding-top: 55px;
  background: linear-gradient(to right, #262626, #212121);
`;
const TimeFoot = styled.footer`
  display: flex;
  align-items: center;
  height: 25px;
  padding-left: 4px;
  border-top: 1px solid #0c0c0c;
  > * { flex: none; }
  b { margin-left: 6px; font-weight: 600; color: #68d8b4; }
`;
const ModeButton = styled.button`
  width: 190px;
  height: 22px;
  margin: 0 201px 0 48px;
  background: #1f1f1f;
  border-radius: 3px;
`;
const Slider = styled.input`
  appearance: none;
  width: 70px;
  height: 16px;
  margin: 0 17px 0 16px;
  background: linear-gradient(#484848, #484848) center / 100% 3px no-repeat;
  &::-webkit-slider-thumb {
    appearance: none;
    width: 15px;
    height: 15px;
    border: 2px solid ${c.icon};
    border-radius: 50%;
    background: ${c.panel};
  }
`;

/* callouts drawn over the layer list */
const CalloutHost = styled.div`position: relative;`;
const EyeCallout = styled.div`
  position: absolute;
  left: 2px;
  top: 47px;
  width: 26px;
  height: 27px;
  border: 4px solid ${c.mark};
`;
const ArrowCallout = styled.svg`position: absolute; left: 38px; top: 81px;`;
const LineCallout = styled.div`
  position: absolute;
  left: 379px;
  top: 97px;
  width: 33px;
  height: 5px;
  background: ${c.mark};
`;

const Layer = ({ n, name, on }: { n: number; name: string; on?: boolean }) => {
  const box = on ? "#343434" : "#202020";
  return (
    <LayerRow $h={24} $bg={on ? "#474747" : "#2f2f2f"}>
      <Cell $pad={4}>
        <Slots $n={4} $w={86}>
          <Slot $box={box} aria-label="Visible"><Eye /></Slot><span />
          <Slot $box={box} aria-label="Solo" /><Slot $box={box} aria-label="Lock" />
        </Slots>
      </Cell>
      <Cell $end={4} $gap={on ? 6 : 10}>{on ? <Down /> : <Right />}<Swatch $size={17} $color={c.label} /></Cell>
      <Cell $pad={9}><Num>{n}</Num></Cell>
      <Cell $pad={5} $gap={6}><Star /><LayerName $on={on}>{name}</LayerName></Cell>
      <Cell $pad={4}>
        <Slots $n={8} $w={173}>
          <Slot $box={box} aria-label="Shy"><Shy /></Slot>
          <Slot $box={box} aria-label="Collapse"><Sun color="#7c7c7c" /></Slot>
          <Slot $box={box} aria-label="Quality"><Slash /></Slot>
          <span /><span />
          <Slot $box={box} aria-label="Motion blur" /><Slot $box={box} aria-label="Adjustment" /><Slot $box={box} aria-label="3D" />
        </Slots>
      </Cell>
      <Cell $pad={5} $gap={9}><Swirl /><Select w={128} h={20} value="None" label={`Parent of ${name}`} /></Cell>
    </LayerRow>
  );
};

const ticks = ["0:00s", "01s", "02s", "03s", "04s", "05s", "06s", "07s", "08s", "09s", "10s"];

const TimelinePanel = () => (
  <Timeline>
    <TimeTabs><Close /><Swatch /><h2>Comp 1</h2><Menu /></TimeTabs>
    <TimeBody>
      <LayerSide>
        <LayerTools>
          <Clock><strong>0:00:01:16</strong><small>00040 (23.976 fps)</small></Clock>
          <Field $w={373}><Search /><input aria-label="Search layers" /></Field>
          <Row $pl={18}>
            <IconButton aria-label="Mini flowchart" $w={32}><Flow /></IconButton>
          </Row>
          <Row $pl={13}>
            <IconButton aria-label="Hide shy layers" $w={38}><ShyBig /></IconButton>
            <IconButton aria-label="Frame blending" $w={37}><Film size={21} /></IconButton>
            <IconButton aria-label="Motion blur" $w={37}><Blur size={21} /></IconButton>
          </Row>
          <Row $pl={14}>
            <IconButton aria-label="Graph editor" $w={32}><Graph /></IconButton>
          </Row>
        </LayerTools>
        <CalloutHost>
          <LayerTable>
            <thead>
              <LayerRow $h={27}>
                <LayerHead $pad={4} $bare><Slots $n={4} $w={86}><Eye /><Speaker /><Dot /><Lock /></Slots></LayerHead>
                <LayerHead $pad={18}><Tag /></LayerHead>
                <LayerHead $pad={8}>#</LayerHead>
                <LayerHead $pad={7}>Layer Name</LayerHead>
                <LayerHead $pad={3}>
                  <Slots $n={8} $w={173}><Shy /><Sun /><Jag /><Fx>fx</Fx><Film /><Blur /><Half /><Cube /></Slots>
                </LayerHead>
                <LayerHead $pad={7}>Parent &amp; Link</LayerHead>
                <LayerHead />
              </LayerRow>
            </thead>
            <tbody>
              <Layer n={1} name="Shape Layer 2" />
              <Layer n={2} name="Shape Layer 1" on />
              <PropRow $h={25}>
                <Cell $end={5}><Stopwatch /></Cell>
                <Cell $pad={4} $hi>Opacity</Cell>
                <Cell><Value><b>9</b>%</Value></Cell>
                <Cell $pad={24}><Swirl /></Cell>
              </PropRow>
            </tbody>
          </LayerTable>
          <EyeCallout />
          <ArrowCallout width="126" height="18" viewBox="0 0 126 18">
            <path d="M2 7h85V1l37 8-37 7v-5H2z" fill={c.mark} stroke={c.mark} strokeLinejoin="round" />
          </ArrowCallout>
          <LineCallout />
        </CalloutHost>
      </LayerSide>
      <TimeSide>
        <Range $h={15} $color="#686868" $r={8} />
        <Ruler>{ticks.map((t) => <Tick key={t}>{t}</Tick>)}</Ruler>
        <Range $h={24} $color="#606060" $r={4} />
        <Cached />
        <Lane $h={24} $bg="#2f2f2f"><Bar /></Lane>
        <Lane $h={24} $bg="#474747"><Bar $on /></Lane>
        <Empty $h={25} />
        <Empty />
        <Playhead>
          <svg width="16" height="40" viewBox="0 0 16 40">
            <path d="M0 21h16v10l-8 9-8-9z" fill={c.blue} /><path d="M8 30v9M6 30h4" stroke="#143c66" strokeWidth="2" />
          </svg>
          <svg width="16" height="18" viewBox="0 0 16 18">
            <path d="M3 2h4l1 1 1-1h4M3 17h4l1-1 1 1h4M8 3v13" fill="none" stroke="#b4b4b4" strokeWidth="1.500" />
          </svg>
        </Playhead>
      </TimeSide>
      <EndSide><Shield /><Motion /></EndSide>
    </TimeBody>
    <TimeFoot>
      <IconButton aria-label="Switches pane" $w={27} $h={22}><Panes /></IconButton>
      <IconButton aria-label="Modes pane" $w={27} $h={22}><Toggle2 /></IconButton>
      <IconButton aria-label="In and out pane" $w={27} $h={22}><Braces /></IconButton>
      <IconButton aria-label="Render time pane" $w={27} $h={22}><Snail /></IconButton>
      <Row $pl={37}>Frame Render Time<b>13ms</b></Row>
      <ModeButton>Toggle Switches / Modes</ModeButton>
      <Hills w={14} />
      <Slider type="range" min="0" max="100" defaultValue="0" aria-label="Timeline zoom" />
      <Hills w={22} />
    </TimeFoot>
  </Timeline>
);

/* ---------- page ---------- */
const Page = styled.div`
  display: flex;
  flex-direction: column;
  min-height: 100vh;
`;
const Workspace = styled.main`
  display: grid;
  grid-template-columns: 458px minmax(0, 1fr) 400px;
  gap: 5px;
  padding: 3px 2px 0;
`;

export default function App() {
  return (
    <Page>
      <GlobalStyle />
      <TopBar />
      <Workspace>
        <Project />
        <Composition />
        <Properties />
      </Workspace>
      <TimelinePanel />
    </Page>
  );
}
